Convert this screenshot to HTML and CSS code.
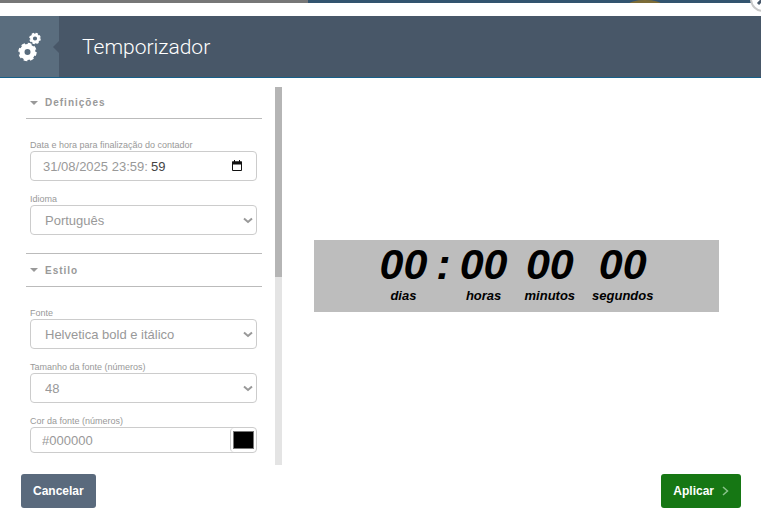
FILE: index.html
```html
<!DOCTYPE html>
<html lang="pt">
<head>
  <meta charset="UTF-8" />
  <meta name="viewport" content="width=device-width, initial-scale=1.0" />
  <title>Temporizador</title>
  <link rel="stylesheet" href="styles.css">
</head>
<body>
  <div class="backdrop">
    <div class="backdrop-left"></div>
    <div class="backdrop-right"><span class="backdrop-spot"></span></div>
  </div>
  <button type="button" class="close" aria-label="Fechar">
    <svg width="26" height="26" viewBox="0 0 26 26"><path d="M8 8l10 10M18 8L8 18" stroke="#48586a" stroke-width="3" /></svg>
  </button>

  <header class="header">
    <div class="header-icon">
      <svg width="24" height="30" viewBox="0 0 24 30" fill="none" stroke="#fff">
        <circle cx="9.500" cy="20" r="5.500" stroke-width="5" />
        <circle cx="9.500" cy="20" r="8" stroke-width="2.400" stroke-dasharray="3.700 2.583" />
        <circle cx="17" cy="6.500" r="3.500" stroke-width="2.800" />
        <circle cx="17" cy="6.500" r="5" stroke-width="1.600" stroke-dasharray="2.300 1.627" />
      </svg>
    </div>
    <h1>Temporizador</h1>
  </header>

  <main class="content">
    <form class="sidebar" id="timerForm">
      <h2 class="section-title">Definições</h2>
      <div class="fields">
        <div class="field">
          <label for="data">Data e hora para finalização do contador</label>
          <div class="control date">
            <input type="text" class="date-main" id="data" value="31/08/2025 23:59:" />
            <input type="text" class="date-seconds" aria-label="Segundos" value="59" />
            <button type="button" class="calendar" aria-label="Abrir calendário">
              <svg width="12" height="12" viewBox="0 0 12 12"><path d="M1.500 2h9v8.500h-9z" fill="none" stroke="#111" /><path d="M1 1.500h10v3H1zM3 0h1v2H3zM8 0h1v2H8z" fill="#111" /></svg>
            </button>
          </div>
        </div>
        <div class="field">
          <label for="idioma">Idioma</label>
          <div class="select">
            <select class="control" id="idioma"><option>Português</option></select>
            <svg class="chevron" width="10" height="7" viewBox="0 0 10 7"><path d="M1 1.500l4 3.500 4-3.500" /></svg>
          </div>
        </div>
      </div>

      <h2 class="section-title bordered">Estilo</h2>
      <div class="fields">
        <div class="field">
          <label for="fonte">Fonte</label>
          <div class="select">
            <select class="control" id="fonte"><option>Helvetica bold e itálico</option></select>
            <svg class="chevron" width="10" height="7" viewBox="0 0 10 7"><path d="M1 1.500l4 3.500 4-3.500" /></svg>
          </div>
        </div>
        <div class="field">
          <label for="tamanho">Tamanho da fonte (números)</label>
          <div class="select">
            <select class="control" id="tamanho"><option>48</option></select>
            <svg class="chevron" width="10" height="7" viewBox="0 0 10 7"><path d="M1 1.500l4 3.500 4-3.500" /></svg>
          </div>
        </div>
        <div class="field">
          <label for="cor">Cor da fonte (números)</label>
          <div class="control color">
            <input type="text" class="color-code" id="cor" value="#000000" />
            <input type="color" class="color-swatch" aria-label="Escolher cor" value="#000000" />
          </div>
        </div>
      </div>
    </form>
    <div class="scrollbar"><div class="scrollbar-thumb"></div></div>

    <section class="preview">
      <div class="counter">
        <div class="group">
          <div class="unit"><span class="number">00</span><span class="name">dias</span></div>
          <span class="number">:</span>
          <div class="unit"><span class="number">00</span><span class="name">horas</span></div>
        </div>
        <div class="unit"><span class="number">00</span><span class="name">minutos</span></div>
        <div class="unit"><span class="number">00</span><span class="name">segundos</span></div>
      </div>
    </section>
  </main>

  <footer class="footer">
    <button type="button" class="btn cancel">Cancelar</button>
    <button type="submit" form="timerForm" class="btn apply">Aplicar
      <svg width="7" height="10" viewBox="0 0 7 10"><path d="M1 1l4.500 4L1 9" fill="none" stroke="#8bc28b" stroke-width="1.500" /></svg>
    </button>
  </footer>
</body>
</html>
```
FILE: styles.css
```css
* {
  box-sizing: border-box;
}
body {
  margin: 0;
  font-family: "Liberation Sans", Arial, sans-serif;
  background: #fff;
  color: #999;
  position: relative;
  overflow-x: hidden;
}
input, select, button {
  font-family: inherit;
  margin: 0;
}

/* page behind the dialog */
.backdrop {
  display: flex;
  height: 3px;
  margin-bottom: 13px;
}
.backdrop-left {
  flex: 0 0 308px;
  background: #777;
}
.backdrop-right {
  flex: 1;
  background: #33546f;
  position: relative;
  overflow: hidden;
}
.backdrop-spot {
  position: absolute;
  right: 99px;
  top: 0;
  width: 34px;
  height: 10px;
  border-radius: 50%;
  background: #7d6c37;
}
.close {
  position: absolute;
  top: -14px;
  right: -15px;
  width: 26px;
  height: 26px;
  padding: 0;
  border: 2px solid #c8c8c8;
  border-radius: 50%;
  background: #fff;
  overflow: hidden;
}
.close svg {
  display: block;
  margin: -2px;
}

.header {
  display: flex;
  align-items: stretch;
  height: 62px;
  background: #485768;
  border-bottom: 1px solid #166089;
}
.header-icon {
  width: 59px;
  background: #5a6d7e;
  display: flex;
  align-items: center;
  justify-content: center;
  position: relative;
}
.header-icon::after {
  content: "";
  position: absolute;
  right: 0;
  top: 25px;
  border: 6px solid transparent;
  border-left: 0;
  border-right-color: #485768;
}
.header h1 {
  margin: 0;
  padding-left: 23px;
  font-family: Roboto, "Liberation Sans", sans-serif;
  font-size: 21px;
  font-weight: 300;
  line-height: 62px;
  color: #fff;
}

.content {
  display: flex;
  height: 378px;
  margin-top: 9px;
}
.sidebar {
  width: 236px;
  margin-left: 26px;
  overflow: hidden;
}
.section-title {
  display: flex;
  align-items: center;
  height: 32px;
  margin: 0;
  padding-left: 4px;
  border-bottom: 1px solid #bbb;
  font-size: 10px;
  letter-spacing: 1px;
}
.section-title::before {
  content: "";
  margin-right: 7px;
  border: 4px solid transparent;
  border-top-color: #999;
  border-bottom: 0;
}
.section-title.bordered {
  height: 34px;
  border-top: 1px solid #bbb;
}
.fields {
  padding: 20px 5px 18px 4px;
}
.field + .field {
  margin-top: 12px;
}
.field label {
  display: block;
  font-size: 9px;
  line-height: 12px;
}
.control {
  display: flex;
  width: 100%;
  height: 30px;
  border: 1px solid #ccc;
  border-radius: 4px;
  background: #fff;
  color: #999;
  font-size: 13px;
}
.control input {
  border: 0;
  padding: 0;
  background: transparent;
  color: #999;
  font-size: 13px;
}
.date {
  align-items: center;
  padding: 0 13px 0 12px;
}
.control .date-main {
  width: 108px;
}
.control .date-seconds {
  width: 24px;
  color: #444;
}
.calendar {
  display: flex;
  margin-left: auto;
  padding: 0;
  border: 0;
  background: none;
}
.select {
  position: relative;
}
.select select {
  appearance: none;
  padding: 0 24px 0 14px;
}
.chevron {
  position: absolute;
  right: 4px;
  top: 12px;
  pointer-events: none;
  fill: none;
  stroke: #999;
  stroke-width: 2;
}
.color {
  height: 26px;
}
.control .color-code {
  flex: 1;
  min-width: 0;
  padding-left: 11px;
}
.control .color-swatch {
  width: 26px;
  height: 24px;
  padding: 3px 2px;
  border-left: 1px solid #ccc;
  border-radius: 4px;
}
.color-swatch::-webkit-color-swatch-wrapper {
  padding: 0;
}
.color-swatch::-webkit-color-swatch {
  border: 1px solid #777;
}

.scrollbar {
  width: 7px;
  margin-left: 13px;
  background: #e4e4e4;
}
.scrollbar-thumb {
  height: 190px;
  background: #b5b5b5;
}

.preview {
  flex: 1;
  display: flex;
  align-items: center;
  padding: 0 42px 0 32px;
}
.counter {
  flex: 1;
  display: flex;
  justify-content: center;
  gap: 17px;
  padding-bottom: 8px;
  background: #bdbdbd;
  color: #000;
  font-weight: bold;
  font-style: italic;
}
.group {
  display: flex;
  gap: 9px;
}
.unit {
  display: flex;
  flex-direction: column;
  align-items: center;
}
.number {
  font-size: 43px;
  line-height: 48px;
}
.name {
  font-size: 13px;
  line-height: 16px;
}

.footer {
  display: flex;
  justify-content: space-between;
  padding: 9px 20px 16px 21px;
}
.btn {
  display: flex;
  align-items: center;
  gap: 8px;
  height: 34px;
  padding: 0 12px;
  border: 0;
  border-radius: 3px;
  color: #fff;
  font-size: 12px;
  font-weight: bold;
}
.cancel {
  background: #5a6a7d;
}
.apply {
  background: #167714;
}
```
